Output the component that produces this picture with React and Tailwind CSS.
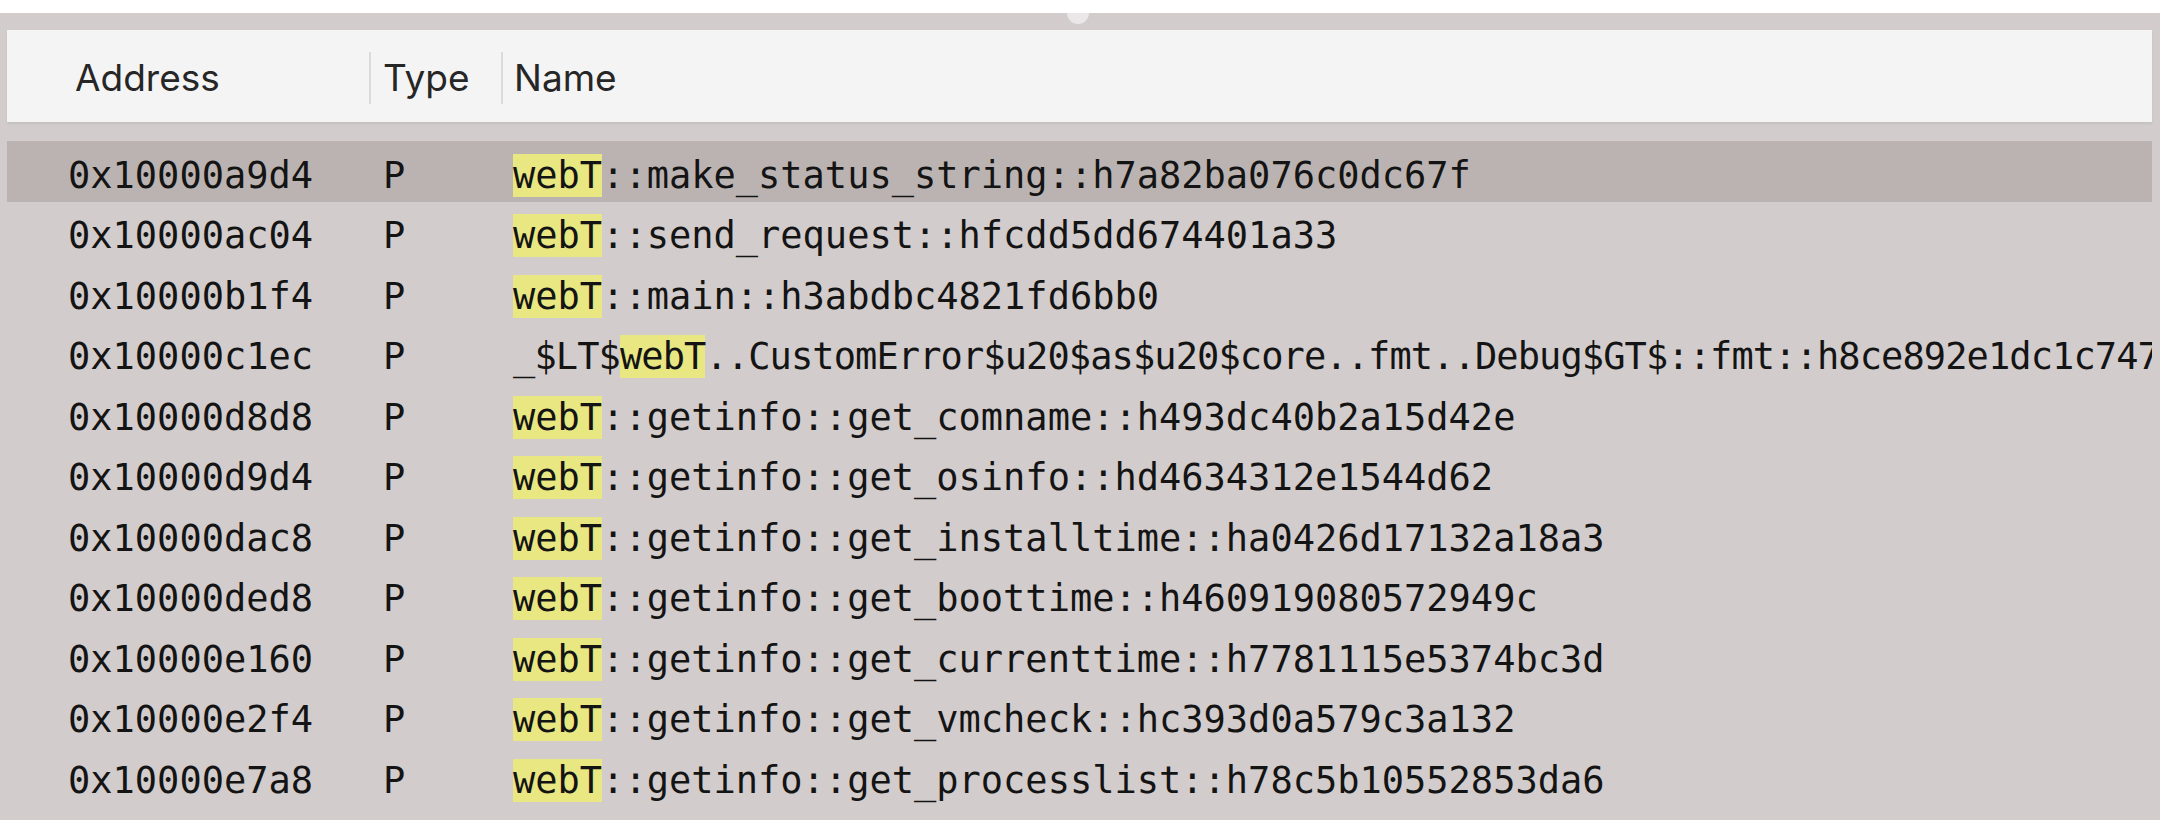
import React from 'react';

const rows = [
  { addr: '0x10000a9d4', type: 'P', pre: '', hit: 'webT', post: '::make_status_string::h7a82ba076c0dc67f' },
  { addr: '0x10000ac04', type: 'P', pre: '', hit: 'webT', post: '::send_request::hfcdd5dd674401a33' },
  { addr: '0x10000b1f4', type: 'P', pre: '', hit: 'webT', post: '::main::h3abdbc4821fd6bb0' },
  {
    addr: '0x10000c1ec',
    type: 'P',
    pre: '_$LT$',
    hit: 'webT',
    post: '..CustomError$u20$as$u20$core..fmt..Debug$GT$::fmt::h8ce892e1dc1c747',
    tight: true,
  },
  { addr: '0x10000d8d8', type: 'P', pre: '', hit: 'webT', post: '::getinfo::get_comname::h493dc40b2a15d42e' },
  { addr: '0x10000d9d4', type: 'P', pre: '', hit: 'webT', post: '::getinfo::get_osinfo::hd4634312e1544d62' },
  { addr: '0x10000dac8', type: 'P', pre: '', hit: 'webT', post: '::getinfo::get_installtime::ha0426d17132a18a3' },
  { addr: '0x10000ded8', type: 'P', pre: '', hit: 'webT', post: '::getinfo::get_boottime::h460919080572949c' },
  { addr: '0x10000e160', type: 'P', pre: '', hit: 'webT', post: '::getinfo::get_currenttime::h7781115e5374bc3d' },
  { addr: '0x10000e2f4', type: 'P', pre: '', hit: 'webT', post: '::getinfo::get_vmcheck::hc393d0a579c3a132' },
  { addr: '0x10000e7a8', type: 'P', pre: '', hit: 'webT', post: '::getinfo::get_processlist::h78c5b10552853da6' },
];

const mono = { fontFamily: '"DejaVu Sans Mono", "Liberation Mono", monospace' };

const SymbolRow = ({ row, selected }) => (
  <div
    className={`flex items-center h-[60.5px] pt-[8px] text-[37px] text-[#141414] whitespace-nowrap overflow-hidden ${
      selected ? 'bg-[#bbb3b1]' : ''
    }`}
    style={mono}
  >
    <div className="w-[362px] shrink-0 pl-[61px]">{row.addr}</div>
    <div className="w-[132px] shrink-0 pl-[14px]">{row.type}</div>
    <div className={`pl-[12px] ${row.tight ? 'tracking-[-0.9px]' : ''}`}>
      {row.pre}
      <span className="bg-[#e9e782]">{row.hit}</span>
      {row.post}
    </div>
  </div>
);

export default function App() {
  return (
    <div className="w-full h-[830px] bg-white pt-[13px] pr-[10px] pb-[10px] overflow-hidden">
      <div className="relative h-full bg-[#d2cccc] pl-[7px] pr-[8px] pt-[17px] overflow-hidden">
        {/* little split handle at the top edge */}
        <div className="absolute top-[-11px] left-[1067px] w-[22px] h-[22px] rounded-full bg-[#e9e7e7]" />

        <div
          className="flex items-center h-[92px] pt-[4px] bg-[#f5f4f4] text-[37px] text-[#262626] shadow-[0_2px_2px_rgba(0,0,0,0.06)]"
          style={{ fontFamily: 'Inter, "Liberation Sans", sans-serif' }}
        >
          <div className="w-[362px] shrink-0 pl-[68px]">Address</div>
          <div className="w-[2px] h-[52px] bg-[#dcdada] shrink-0" />
          <div className="w-[130px] shrink-0 pl-[12px]">Type</div>
          <div className="w-[2px] h-[52px] bg-[#dcdada] shrink-0" />
          <div className="pl-[11px]">Name</div>
        </div>

        <div className="mt-[19px]">
          {rows.map((row, i) => (
            <SymbolRow key={row.addr} row={row} selected={i === 0} />
          ))}
        </div>
      </div>
    </div>
  );
}
